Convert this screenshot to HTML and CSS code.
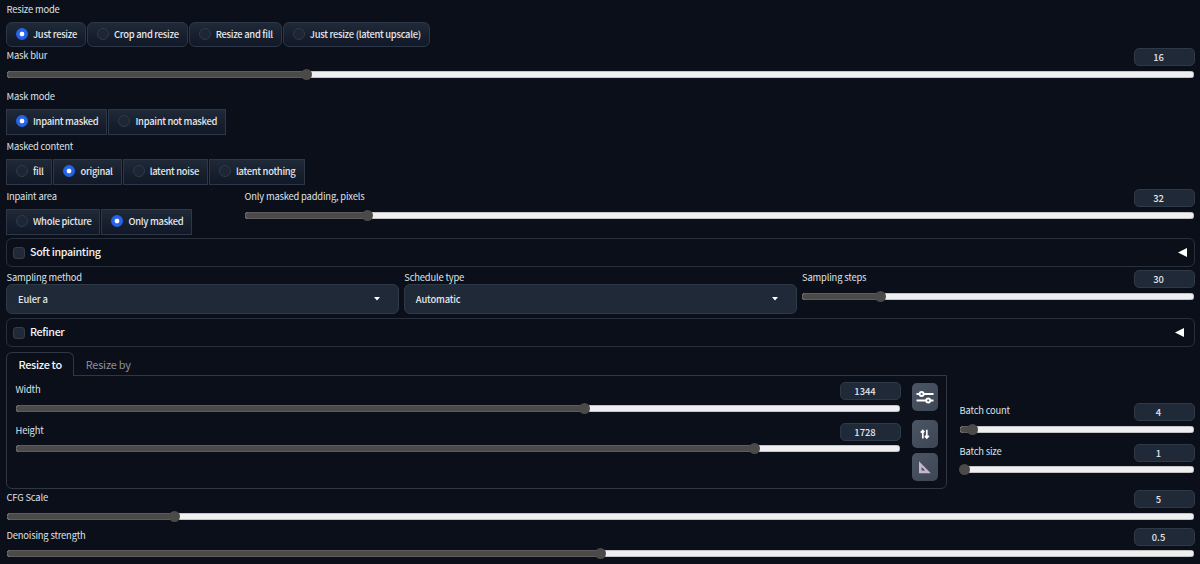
FILE: index.html
```html
<!DOCTYPE html>
<html lang="en">
<head>
<meta charset="utf-8">
<title>Image settings</title>
<link rel="stylesheet" href="styles.css">
</head>
<body>
<main class="app">
  <section class="choice rounded">
    <div class="label">Resize mode</div>
    <div class="options">
      <div class="option on"><i class="radio"></i>Just resize</div>
      <div class="option"><i class="radio"></i>Crop and resize</div>
      <div class="option"><i class="radio"></i>Resize and fill</div>
      <div class="option"><i class="radio"></i>Just resize (latent upscale)</div>
    </div>
  </section>
  <section class="slider mask-blur">
    <div class="head"><span class="label">Mask blur</span><span class="number">16</span></div>
    <div class="track"><div class="fill" style="width:299.5px"></div></div>
  </section>
  <section class="choice">
    <div class="label">Mask mode</div>
    <div class="options">
      <div class="option on"><i class="radio"></i>Inpaint masked</div>
      <div class="option"><i class="radio"></i>Inpaint not masked</div>
    </div>
  </section>
  <section class="choice">
    <div class="label">Masked content</div>
    <div class="options">
      <div class="option"><i class="radio"></i>fill</div>
      <div class="option on"><i class="radio"></i>original</div>
      <div class="option"><i class="radio"></i>latent noise</div>
      <div class="option"><i class="radio"></i>latent nothing</div>
    </div>
  </section>
  <div class="area-row">
    <section class="choice">
      <div class="label">Inpaint area</div>
      <div class="options">
        <div class="option"><i class="radio"></i>Whole picture</div>
        <div class="option on"><i class="radio"></i>Only masked</div>
      </div>
    </section>
    <section class="slider">
      <div class="head"><span class="label">Only masked padding, pixels</span><span class="number">32</span></div>
      <div class="track"><div class="fill" style="width:122.5px"></div></div>
    </section>
  </div>
  <section class="accordion"><i class="check"></i><span>Soft inpainting</span><svg class="arrow" viewBox="0 0 9 9"><path d="M0 4.5 9 0v9z"/></svg></section>
  <div class="sampling-row">
    <section class="select">
      <div class="label">Sampling method</div>
      <div class="box"><span>Euler a</span><svg class="caret" viewBox="0 0 6 4"><path d="M0 0h6L3 3.6z"/></svg></div>
    </section>
    <section class="select">
      <div class="label">Schedule type</div>
      <div class="box"><span>Automatic</span><svg class="caret" viewBox="0 0 6 4"><path d="M0 0h6L3 3.6z"/></svg></div>
    </section>
    <section class="slider">
      <div class="head"><span class="label">Sampling steps</span><span class="number">30</span></div>
      <div class="track"><div class="fill" style="width:78.5px"></div></div>
    </section>
  </div>
  <section class="accordion refiner"><i class="check"></i><span>Refiner</span><svg class="arrow" viewBox="0 0 9 9"><path d="M0 4.5 9 0v9z"/></svg></section>
  <div class="size-row">
    <div class="tabs">
      <div class="tab-bar"><div class="tab active">Resize to</div><div class="tab">Resize by</div></div>
      <div class="panel">
        <div class="dimensions">
          <section class="slider">
            <div class="head"><span class="label">Width</span><span class="number">1344</span></div>
            <div class="track"><div class="fill" style="width:569px"></div></div>
          </section>
          <section class="slider">
            <div class="head"><span class="label">Height</span><span class="number">1728</span></div>
            <div class="track"><div class="fill" style="width:738.5px"></div></div>
          </section>
        </div>
        <div class="tools">
          <div class="tool"><svg viewBox="0 0 26 28"><path d="M4.5 11h17M4.5 17.5h17" stroke="#fff" stroke-width="2"/><circle cx="9.6" cy="11" r="2" fill="#4b5563" stroke="#fff" stroke-width="1.9"/><circle cx="16.2" cy="17.5" r="2" fill="#4b5563" stroke="#fff" stroke-width="1.9"/></svg></div>
          <div class="tool"><svg viewBox="0 0 26 28"><path d="M10.8 18.5v-8M8.8 12.6l2-2.2 1.6 1.8M14.8 9.7v8M12.9 15.9l1.9 2.1 2-2.2" fill="none" stroke="#fff" stroke-width="1.7"/></svg></div>
          <div class="tool"><svg viewBox="0 0 26 28"><path fill="#c5b8cc" fill-rule="evenodd" d="M7 8.2 18.8 20.2H7zM9.6 14v3.5h3.5z"/></svg></div>
        </div>
      </div>
    </div>
    <div class="batch">
      <section class="slider">
        <div class="head"><span class="label">Batch count</span><span class="number">4</span></div>
        <div class="track"><div class="fill" style="width:12.5px"></div></div>
      </section>
      <section class="slider">
        <div class="head"><span class="label">Batch size</span><span class="number">1</span></div>
        <div class="track"><div class="fill" style="width:5px"></div></div>
      </section>
    </div>
  </div>
  <section class="slider cfg">
    <div class="head"><span class="label">CFG Scale</span><span class="number">5</span></div>
    <div class="track"><div class="fill" style="width:167.5px"></div></div>
  </section>
  <section class="slider">
    <div class="head"><span class="label">Denoising strength</span><span class="number">0.5</span></div>
    <div class="track"><div class="fill" style="width:593.5px"></div></div>
  </section>
</main>
</body>
</html>
```
FILE: styles.css
```css
* { box-sizing: border-box; }
body {
  margin: 0;
  height: 564px;
  overflow: hidden;
  background: #0b0f19;
  color: #e5e7eb;
  font: 400 9.4px/18px "Noto Sans CJK SC", sans-serif;
  letter-spacing: -0.18px;
  white-space: nowrap;
}
.app { padding: 0 5.5px 0 6px; }
.label { padding-left: 0.5px; color: #dfe2e7; }
.choice { height: 50px; }
.choice > .label { height: 18px; line-height: 18px; }
.choice.rounded { height: 48px; }
.options { display: flex; gap: 1px; margin-top: 4px; }
.option {
  display: flex;
  align-items: center;
  gap: 5px;
  height: 25.5px;
  padding: 0 8px 1px 9px;
  border: 1px solid #2d3747;
  background: linear-gradient(to bottom, #1f2937, #111827);
  font-weight: 500;
  letter-spacing: -0.28px;
}
.rounded .option { border-radius: 6px; height: 25px; }
.radio {
  width: 12px;
  height: 12px;
  border: 1px solid #303a49;
  border-radius: 50%;
  background: #1c2635;
}
.on .radio {
  border-color: #2563eb;
  background: radial-gradient(circle, #fff 0 2px, #2563eb 2.7px);
}
.slider { height: 37px; }
.head { display: flex; justify-content: space-between; height: 18px; }
.head .label { line-height: 15px; }
.number {
  width: 61px;
  height: 18px;
  padding-right: 11px;
  border: 1px solid #2f3a49;
  border-radius: 5px;
  background: #1f2937;
  font-weight: 500;
  letter-spacing: 0;
  line-height: 16px;
  text-align: center;
}
.track {
  height: 7px;
  margin: 4.5px 1px 0 0.5px;
  border-radius: 4px;
  background: #efeff1;
  box-shadow: inset 0 0 0 0.5px #999;
}
.fill {
  display: flex;
  align-items: center;
  justify-content: flex-end;
  height: 7px;
  border: 1px solid #5d5d5d;
  border-right: 0;
  border-radius: 4px 0 0 4px;
  background: #4b4a49;
}
.fill::after {
  content: "";
  flex: none;
  width: 11px;
  height: 11px;
  margin-right: -5.5px;
  border-radius: 50%;
  background: #4c4a49;
}
.mask-blur { height: 39px; }
.area-row { display: grid; grid-template-columns: 238px 1fr; height: 51px; }
.area-row .slider { padding-top: 2px; }
.accordion {
  display: flex;
  align-items: center;
  height: 29px;
  padding: 0 7px 0 5.5px;
  border: 1px solid #29303c;
  border-radius: 6px;
  color: #f3f4f6;
  font-size: 10.7px;
  font-weight: 500;
  letter-spacing: -0.34px;
}
.accordion span { margin-top: -1px; }
.check {
  width: 12px;
  height: 12px;
  margin: 1px 5.5px 0 0;
  border: 1px solid #323c4a;
  border-radius: 3px;
  background: #1f2937;
}
.arrow { width: 9px; height: 9px; margin-left: auto; fill: #fff; }
.sampling-row {
  display: grid;
  grid-template-columns: 393px 393px 1fr;
  column-gap: 4.8px;
  height: 51px;
  padding-top: 1px;
}
.sampling-row .slider { padding-top: 2px; }
.sampling-row .select > .label { height: 16px; }
.box {
  display: flex;
  align-items: center;
  justify-content: space-between;
  height: 30px;
  padding: 0 18px 0 11px;
  border: 1px solid #2f3a49;
  border-radius: 6px;
  background: #1f2937;
  font-weight: 500;
}
.box span { margin-top: -1px; }
.refiner { padding-right: 10px; }
.caret { width: 6px; height: 4px; fill: #fff; }
.size-row { display: flex; gap: 12px; height: 143px; padding-top: 5px; }
.tabs { width: 941px; }
.tab-bar { display: flex; height: 23px; font-size: 10.9px; line-height: 24px; letter-spacing: -0.2px; }
.tab { padding: 0 12px; color: #8b919c; }
.tab.active {
  z-index: 1;
  height: 24px;
  padding: 0 11px 0 11.5px;
  border: 1px solid #303743;
  border-bottom: 0;
  border-radius: 6px 6px 0 0;
  background: #0b0f19;
  color: #f3f4f6;
  font-weight: 500;
  letter-spacing: -0.33px;
  line-height: 23px;
}
.panel {
  display: flex;
  gap: 11px;
  height: 114px;
  padding: 6px 8px 0;
  border: 1px solid #303743;
  border-radius: 0 0 6px 6px;
}
.dimensions { width: 886.4px; }
.dimensions .slider { height: 40.5px; }
.tools { display: grid; grid-template-rows: 32.5px 28px 28px; row-gap: 5px; padding-top: 0.5px; }
.tool { width: 26px; height: 28px; border-radius: 5px; background: linear-gradient(135deg, #4b5563, #3c4655); }
.tool svg { display: block; width: 26px; height: 28px; }
.batch { flex: 1; padding-top: 51px; }
.batch .slider { height: 40.5px; }
.cfg { height: 37.5px; }
```
